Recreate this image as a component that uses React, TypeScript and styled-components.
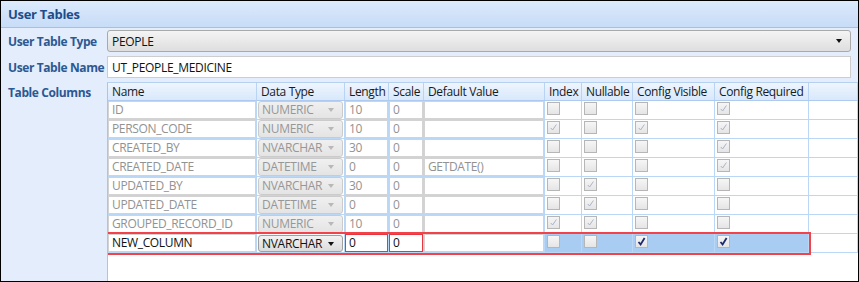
import styled, { createGlobalStyle } from 'styled-components';

type ColumnRow = {
  name: string;
  type: string;
  length: string;
  scale: string;
  def: string;
  index: boolean;
  nullable: boolean;
  visible: boolean;
  required: boolean;
};

// widths of the grid columns, the filler column takes what is left
const COLUMNS = '149px 88px 44px 35px 121px 37px 51px 82px 94px';

const GlobalStyle = createGlobalStyle`
  html, body {
    margin: 0;
    padding: 0;
    background: #ffffff;
  }
  body {
    font-family: "Open Sans", "Noto Sans", sans-serif;
  }
`;

const Frame = styled.div`
  width: 859px;
  height: 282px;
  box-sizing: border-box;
  border: 1px solid #000;
  background: #e3edfb;
  display: flex;
  flex-direction: column;
  overflow: hidden;
`;

const TitleBar = styled.div`
  height: 26px;
  flex: none;
  display: flex;
  align-items: center;
  padding-left: 7px;
  background: linear-gradient(to bottom, #dceafc, #c7dcf7);
  border-bottom: 1px solid #a3c1e8;
  color: #1d4c8a;
  font-size: 13px;
  font-weight: 700;
  letter-spacing: -0.3px;
`;

const Form = styled.div`
  flex: 1;
  min-height: 0;
  display: grid;
  grid-template-columns: 106px 1fr;
  grid-template-rows: 22px 22px 1fr;
  row-gap: 4px;
  padding-top: 2px;
`;

const Label = styled.div<{ top?: boolean }>`
  display: flex;
  align-items: ${(p) => (p.top ? 'flex-start' : 'center')};
  padding-left: 7px;
  padding-top: ${(p) => (p.top ? '2px' : '0')};
  color: #2c5893;
  font-size: 12px;
  font-weight: 700;
  letter-spacing: -0.4px;
  white-space: nowrap;
`;

const Combo = styled.div`
  margin-right: 7px;
  display: flex;
  align-items: center;
  justify-content: space-between;
  padding: 0 8px 0 4px;
  border: 1px solid #a9a9a9;
  border-radius: 3px;
  background: linear-gradient(to bottom, #f4f4f4, #dedede);
  font-size: 12px;
  color: #111;
  letter-spacing: -0.3px;
`;

const Arrow = styled.span<{ muted?: boolean }>`
  width: 0;
  height: 0;
  border-left: 3px solid transparent;
  border-right: 3px solid transparent;
  border-top: 4px solid ${(p) => (p.muted ? '#b8b8b8' : '#111')};
`;

const TextBox = styled.div`
  margin-right: 7px;
  display: flex;
  align-items: center;
  padding-left: 4px;
  border: 1px solid #cdcdcd;
  background: #fff;
  font-size: 12px;
  color: #111;
  letter-spacing: -0.3px;
`;

const Grid = styled.div`
  background: #fff;
  border-left: 1px solid #a8c6ec;
  border-top: 1px solid #b6d0f0;
  overflow: hidden;
`;

const HeaderRow = styled.div`
  display: grid;
  grid-template-columns: ${COLUMNS} 1fr;
  height: 18px;
  box-sizing: border-box;
  background: linear-gradient(to bottom, #eef5fe, #d8e8fb);
  border-bottom: 1px solid #aecbef;
`;

const HeaderCell = styled.div`
  display: flex;
  align-items: center;
  padding-left: 4px;
  border-right: 1px solid #b9d3f2;
  font-size: 12px;
  color: #1a1a1a;
  letter-spacing: -0.35px;
  white-space: nowrap;
  overflow: hidden;
`;

const Row = styled.div`
  display: flex;
  height: 19px;
`;

const Cells = styled.div<{ flagged?: boolean }>`
  display: grid;
  grid-template-columns: ${COLUMNS};
  grid-template-rows: 19px;
  height: 19px;
  outline: ${(p) => (p.flagged ? '2px solid #f2434b' : 'none')};
  position: relative;
  z-index: ${(p) => (p.flagged ? 1 : 0)};
`;

const Cell = styled.div<{ selected?: boolean }>`
  box-sizing: border-box;
  height: 19px;
  border-right: 1px solid #bad7f6;
  border-bottom: 1px solid #bad7f6;
  background: ${(p) => (p.selected ? '#a9cdf2' : '#fff')};
  display: flex;
  min-width: 0;
  overflow: hidden;
`;

const Filler = styled(Cell)`
  flex: 1;
`;

const Field = styled.div<{ active?: boolean; invalid?: boolean }>`
  flex: 1;
  box-sizing: border-box;
  display: flex;
  align-items: center;
  padding-left: 3px;
  border: 1px solid ${(p) => (p.invalid ? '#e8363f' : '#d3d3d3')};
  font-size: 12px;
  line-height: 14px;
  color: ${(p) => (p.active ? '#111' : '#929292')};
  letter-spacing: -0.35px;
  white-space: nowrap;
  overflow: hidden;
`;

const TypeBox = styled.div<{ active?: boolean }>`
  flex: 1;
  box-sizing: border-box;
  margin: ${(p) => (p.active ? '1px 1px 0 1px' : '0 1px')};
  display: flex;
  align-items: center;
  justify-content: space-between;
  padding: 0 8px 0 3px;
  border: 1px solid ${(p) => (p.active ? '#a0a0a0' : '#cbcbcb')};
  border-radius: 3px;
  background: ${(p) =>
    p.active
      ? 'linear-gradient(to bottom, #f2f2f2, #dcdcdc)'
      : 'linear-gradient(to bottom, #f0f0f0, #e4e4e4)'};
  font-size: 12px;
  line-height: 14px;
  color: ${(p) => (p.active ? '#111' : '#979797')};
  letter-spacing: -0.3px;
`;

const Check = styled.div`
  box-sizing: border-box;
  width: 13px;
  height: 13px;
  margin: 1px 0 0 2px;
  border: 1px solid #b6b6b6;
  background: linear-gradient(to bottom, #f6f6f6, #e5e5e5);
  display: flex;
  align-items: center;
  justify-content: center;
`;

const rows: ColumnRow[] = [
  { name: 'ID', type: 'NUMERIC', length: '10', scale: '0', def: '', index: false, nullable: false, visible: false, required: true },
  { name: 'PERSON_CODE', type: 'NUMERIC', length: '10', scale: '0', def: '', index: true, nullable: false, visible: true, required: true },
  { name: 'CREATED_BY', type: 'NVARCHAR', length: '30', scale: '0', def: '', index: false, nullable: false, visible: false, required: true },
  { name: 'CREATED_DATE', type: 'DATETIME', length: '0', scale: '0', def: 'GETDATE()', index: false, nullable: false, visible: false, required: true },
  { name: 'UPDATED_BY', type: 'NVARCHAR', length: '30', scale: '0', def: '', index: false, nullable: true, visible: false, required: false },
  { name: 'UPDATED_DATE', type: 'DATETIME', length: '0', scale: '0', def: '', index: false, nullable: true, visible: false, required: false },
  { name: 'GROUPED_RECORD_ID', type: 'NUMERIC', length: '10', scale: '0', def: '', index: true, nullable: true, visible: false, required: false },
  { name: 'NEW_COLUMN', type: 'NVARCHAR', length: '0', scale: '0', def: '', index: false, nullable: false, visible: true, required: true }
];

const headers = [
  'Name',
  'Data Type',
  'Length',
  'Scale',
  'Default Value',
  'Index',
  'Nullable',
  'Config Visible',
  'Config Required',
  ''
];

function CheckBox({ checked, active }: { checked: boolean; active: boolean }) {
  return (
    <Check>
      {checked && (
        <svg width="9" height="9" viewBox="0 0 9 9">
          <path
            d={active ? 'M1.5 5 L3.6 7.4 L7.6 1' : 'M1.8 5 L3.6 7 L7.4 1.5'}
            fill="none"
            stroke={active ? '#1c2a6e' : '#aab3cb'}
            strokeWidth={active ? 1.8 : 1}
          />
        </svg>
      )}
    </Check>
  );
}

export default function App() {
  return (
    <>
      <GlobalStyle />
      <Frame>
        <TitleBar>User Tables</TitleBar>
        <Form>
          <Label>User Table Type</Label>
          <Combo>
            <span>PEOPLE</span>
            <Arrow />
          </Combo>
          <Label>User Table Name</Label>
          <TextBox>UT_PEOPLE_MEDICINE</TextBox>
          <Label top>Table Columns</Label>
          <Grid>
            <HeaderRow>
              {headers.map((h, i) => (
                <HeaderCell key={i}>{h}</HeaderCell>
              ))}
            </HeaderRow>
            {rows.map((r, i) => {
              const active = i === rows.length - 1;
              return (
                <Row key={r.name}>
                  <Cells flagged={active}>
                    <Cell>
                      <Field active={active}>{r.name}</Field>
                    </Cell>
                    <Cell>
                      <TypeBox active={active}>
                        <span>{r.type}</span>
                        <Arrow muted={!active} />
                      </TypeBox>
                    </Cell>
                    <Cell>
                      <Field active={active} invalid={active}>{r.length}</Field>
                    </Cell>
                    <Cell>
                      <Field active={active} invalid={active}>{r.scale}</Field>
                    </Cell>
                    <Cell>
                      <Field active={active}>{r.def}</Field>
                    </Cell>
                    <Cell selected={active}>
                      <CheckBox checked={r.index} active={active} />
                    </Cell>
                    <Cell selected={active}>
                      <CheckBox checked={r.nullable} active={active} />
                    </Cell>
                    <Cell selected={active}>
                      <CheckBox checked={r.visible} active={active} />
                    </Cell>
                    <Cell selected={active}>
                      <CheckBox checked={r.required} active={active} />
                    </Cell>
                  </Cells>
                  <Filler />
                </Row>
              );
            })}
          </Grid>
        </Form>
      </Frame>
    </>
  );
}
